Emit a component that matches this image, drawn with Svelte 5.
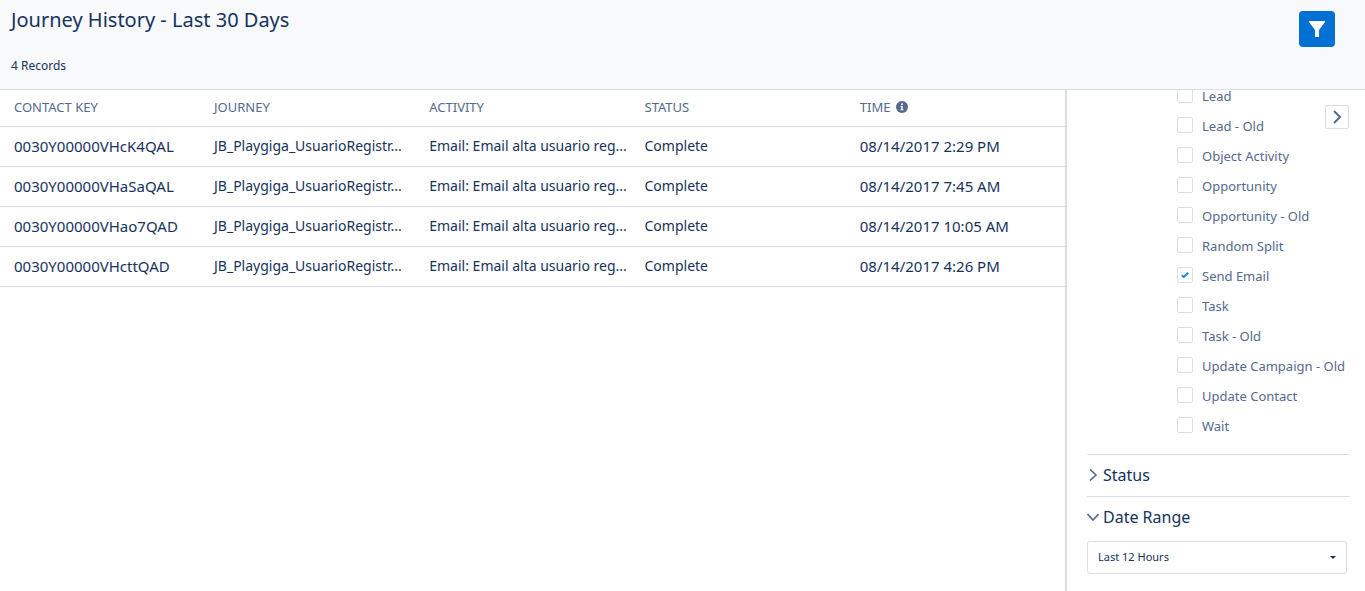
<script lang="ts">
  interface HistoryRow { key: string; journey: string; activity: string; status: string; time: string }
  interface ActivityOption { label: string; checked: boolean }

  const rows: HistoryRow[] = [
    { key: '0030Y00000VHcK4QAL', time: '08/14/2017 2:29 PM' },
    { key: '0030Y00000VHaSaQAL', time: '08/14/2017 7:45 AM' },
    { key: '0030Y00000VHao7QAD', time: '08/14/2017 10:05 AM' },
    { key: '0030Y00000VHcttQAD', time: '08/14/2017 4:26 PM' },
  ].map(r => ({
    ...r,
    journey: 'JB_Playgiga_UsuarioRegistr...',
    activity: 'Email: Email alta usuario reg...',
    status: 'Complete',
  }));

  let activities = $state<ActivityOption[]>([
    'Lead',
    'Lead - Old',
    'Object Activity',
    'Opportunity',
    'Opportunity - Old',
    'Random Split',
    'Send Email',
    'Task',
    'Task - Old',
    'Update Campaign - Old',
    'Update Contact',
    'Wait',
  ].map(label => ({ label, checked: label === 'Send Email' })));

  let statusOpen = $state(false);
  let dateOpen = $state(true);
  let showFilters = $state(true);
  let range = $state('Last 12 Hours');
</script>

<div class="page">
  <header class="head">
    <div>
      <h1>Journey History - Last 30 Days</h1>
      <p class="count">{rows.length} Records</p>
    </div>
    <button class="filter-btn" aria-label="Filter" onclick={() => (showFilters = !showFilters)}>
      <svg viewBox="0 0 16 16" width="16" height="16">
        <path d="M0 0h16v1L10 9v7H6V9L0 1z" fill="#fff" />
      </svg>
    </button>
  </header>

  <div class="body">
    <main>
      <table>
        <thead>
          <tr>
            <th class="key">Contact Key</th>
            <th>Journey</th>
            <th>Activity</th>
            <th>Status</th>
            <th>
              <span class="time">
                Time
                <svg viewBox="0 0 12 12" width="12" height="12" aria-hidden="true">
                  <circle cx="6" cy="6" r="6" fill="#54698d" />
                  <circle cx="6" cy="3.2" r="1" fill="#fff" />
                  <path d="M4.600 5h2.100v3.200h.8v1H4.500v-1h.8V6h-.7z" fill="#fff" />
                </svg>
              </span>
            </th>
          </tr>
        </thead>
        <tbody>
          {#each rows as row (row.key)}
            <tr>
              <td class="num">{row.key}</td>
              <td>{row.journey}</td>
              <td>{row.activity}</td>
              <td>{row.status}</td>
              <td class="num">{row.time}</td>
            </tr>
          {/each}
        </tbody>
      </table>
    </main>

    {#if showFilters}
      <aside>
        <button class="collapse" aria-label="Collapse filters" onclick={() => (showFilters = false)}>
          <svg viewBox="0 0 10 14" width="10" height="14">
            <path d="M2 1l6 6-6 6" fill="none" stroke="#54698d" stroke-width="2" />
          </svg>
        </button>

        <div class="options">
          {#each activities as option (option.label)}
            <label class="option">
              <input type="checkbox" bind:checked={option.checked} />
              <span class="box">
                {#if option.checked}
                  <svg viewBox="0 0 8 6" width="8" height="6">
                    <path d="M.8 3.200l2 1.800L7.200.8" fill="none" stroke="#1589ee" stroke-width="2" />
                  </svg>
                {/if}
              </span>
              {option.label}
            </label>
          {/each}
        </div>

        <section>
          <button class="toggle" aria-expanded={statusOpen} onclick={() => (statusOpen = !statusOpen)}>
            <svg class:open={statusOpen} viewBox="0 0 12 12" width="12" height="12">
              <path d="M3 .5L9 6l-6 5.500" fill="none" stroke="#54698d" stroke-width="1.600" />
            </svg>
            Status
          </button>
        </section>

        <section>
          <button class="toggle" aria-expanded={dateOpen} onclick={() => (dateOpen = !dateOpen)}>
            <svg class:open={dateOpen} viewBox="0 0 12 12" width="12" height="12">
              <path d="M3 .5L9 6l-6 5.500" fill="none" stroke="#54698d" stroke-width="1.600" />
            </svg>
            Date Range
          </button>
          {#if dateOpen}
            <div class="select">
              <select bind:value={range} aria-label="Date Range">
                <option>Last 12 Hours</option>
                <option>Last 30 Days</option>
              </select>
              <svg viewBox="0 0 6 3" width="6" height="3" aria-hidden="true">
                <path d="M0 0h6L3 3z" fill="#16325c" />
              </svg>
            </div>
          {/if}
        </section>
      </aside>
    {/if}
  </div>
</div>

<style>
  :global(body) { margin: 0; background: #fff; }

  .page {
    display: flex;
    flex-direction: column;
    height: 100vh;
    font-family: 'Noto Sans', 'Open Sans', sans-serif;
    font-size: 14px;
    color: #16325c;
  }
  button, select { font-family: inherit; color: inherit; cursor: pointer; }
  svg { display: block; flex: none; }

  .head {
    display: flex;
    justify-content: space-between;
    align-items: flex-start;
    padding: 6px 30px 14px 11px;
    background: #f7f9fb;
    border-bottom: 1px solid #d8dde6;
  }
  h1 {
    margin: 0;
    font-size: 20px;
    font-weight: 400;
    line-height: 28px;
  }
  .count {
    margin: 23px 0 0;
    font-size: 12px;
    line-height: 18px;
  }
  .filter-btn {
    display: flex;
    align-items: center;
    justify-content: center;
    width: 36px;
    height: 36px;
    margin-top: 5px;
    padding: 0;
    border: none;
    border-radius: 4px;
    background: #0070d2;
  }

  .body {
    display: flex;
    flex: 1;
    min-height: 0;
  }
  main { flex: 1; min-width: 0; }
  table {
    width: 100%;
    table-layout: fixed;
    border-collapse: separate;
    border-spacing: 0;
  }
  th, td {
    box-sizing: border-box;
    padding: 0 4px 2px 10px;
    border-bottom: 1px solid #d8dde6;
    text-align: left;
    white-space: nowrap;
    overflow: hidden;
    text-overflow: ellipsis;
  }
  th {
    height: 37px;
    font-size: 13px;
    font-weight: 400;
    text-transform: uppercase;
    color: #54698d;
  }
  .key { width: 204px; }
  th:first-child, td:first-child { padding-left: 14px; }
  td { height: 40px; line-height: 20px; }
  .num { font-size: 15px; }
  .time { display: flex; align-items: center; gap: 6px; }

  aside {
    position: relative;
    box-sizing: border-box;
    width: 300px;
    padding: 0 16px 0 20px;
    border-left: 2px solid #d8dde6;
    overflow: hidden;
  }
  .collapse {
    position: absolute;
    top: 15px;
    right: 16px;
    display: flex;
    align-items: center;
    justify-content: center;
    width: 24px;
    height: 24px;
    padding: 0;
    border: 1px solid #d8dde6;
    border-radius: 2px;
    background: #fff;
  }

  .options {
    margin: -9px 0 13px 90px;
  }
  .option {
    position: relative;
    display: flex;
    align-items: center;
    gap: 9px;
    height: 30px;
    font-size: 13px;
    white-space: nowrap;
    color: #54698d;
  }
  .option input {
    position: absolute;
    width: 16px;
    height: 16px;
    margin: 0;
    opacity: 0;
  }
  .box {
    display: flex;
    align-items: center;
    justify-content: center;
    box-sizing: border-box;
    width: 16px;
    height: 16px;
    margin-bottom: 2px;
    border: 1px solid #d8dde6;
    border-radius: 2px;
    background: #fff;
  }

  section { border-top: 1px solid #d8dde6; }
  .toggle {
    display: flex;
    align-items: center;
    gap: 4px;
    width: 100%;
    height: 41px;
    padding: 0 0 2px;
    border: none;
    background: none;
    font-size: 16px;
    text-align: left;
  }
  .open { transform: rotate(90deg); }

  .select {
    position: relative;
    margin: 3px 2px 0 0;
  }
  .select select {
    appearance: none;
    display: block;
    width: 100%;
    height: 33px;
    padding: 0 10px 2px;
    border: 1px solid #d8dde6;
    border-radius: 3px;
    background: #fff;
    font-size: 11px;
  }
  .select svg {
    position: absolute;
    top: 15px;
    right: 11px;
    pointer-events: none;
  }
</style>
